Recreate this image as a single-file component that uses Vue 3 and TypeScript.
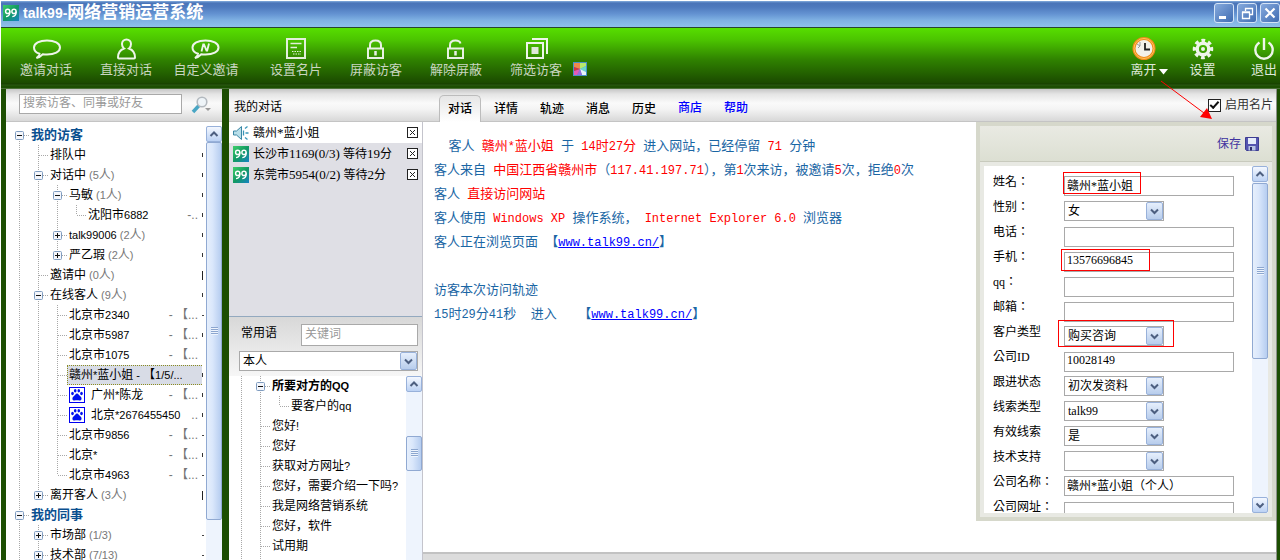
<script setup lang="ts">
import { ref } from 'vue'

interface Run { t: string; latin: boolean }
interface TreeRow {
  cells: string
  name: string
  count?: string
  tail?: string
  mark?: 'tick' | 'bar' | 'dot'
  root?: boolean
  bold?: boolean
  selected?: boolean
  paw?: boolean
}
interface Part { t: string; kind?: 'red' | 'link' }
interface Field {
  id: string
  label: string
  value: string
  select?: boolean
  note?: string
}

// Splits mixed text so that Latin runs can take their own family and size.
function runs(text: string): Run[] {
  return (text.match(/[\x20-\x7e]+|[^\x20-\x7e]+/g) ?? []).map(t => ({
    t,
    latin: /^[\x20-\x7e]/.test(t),
  }))
}

// Dotted guide lines of one 19 x 20 tree cell.
function guide(c: string): string {
  const up = 'M9.5 0V10'
  const down = 'M9.5 10V20'
  const across = 'M10 10.5H19'
  switch (c) {
    case '|': return up + down
    case 'T': return up + down + across
    case 'L': return up + across
    case 'r': return down + across
    case '-': case '+': return up + down + across
    case 'P': return up + across
    default: return ''
  }
}
const isBox = (c: string) => 'r-+P'.includes(c)
const isPlus = (c: string) => c === '+' || c === 'P'

const visitors: TreeRow[] = [
  { cells: 'r', name: '我的访客', root: true },
  { cells: '|T', name: '排队中', mark: 'tick' },
  { cells: '|-', name: '对话中', count: '(5人)', mark: 'tick' },
  { cells: '||-', name: '马敏', count: '(1人)', mark: 'tick' },
  { cells: '|||L', name: '沈阳市6882', tail: '-..', mark: 'tick' },
  { cells: '||+', name: 'talk99006', count: '(2人)', mark: 'tick' },
  { cells: '||P', name: '严乙瑕', count: '(2人)', mark: 'tick' },
  { cells: '|T', name: '邀请中', count: '(0人)', mark: 'bar' },
  { cells: '|-', name: '在线客人', count: '(9人)', mark: 'tick' },
  { cells: '||T', name: '北京市2340', tail: '- 【...', mark: 'dot' },
  { cells: '||T', name: '北京市5987', tail: '- 【...', mark: 'tick' },
  { cells: '||T', name: '北京市1075', tail: '- 【...' },
  { cells: '||T', name: '赣州*蓝小姐 - 【1/5/...', selected: true, mark: 'tick' },
  { cells: '||T', name: '广州*陈龙', tail: '- 【...', paw: true, mark: 'tick' },
  { cells: '||T', name: '北京*2676455450', tail: '..', paw: true, mark: 'tick' },
  { cells: '||T', name: '北京市9856', tail: '- 【...', mark: 'dot' },
  { cells: '||T', name: '北京*', tail: '- 【...', mark: 'tick' },
  { cells: '||L', name: '北京市4963', tail: '- 【...', mark: 'dot' },
  { cells: '|P', name: '离开客人', count: '(3人)', mark: 'bar' },
  { cells: '-', name: '我的同事', root: true },
  { cells: '|+', name: '市场部', count: '(1/3)', mark: 'dot' },
  { cells: '|+', name: '技术部', count: '(7/13)', mark: 'dot' },
]

const phrases: TreeRow[] = [
  { cells: '|-', name: '所要对方的QQ', bold: true },
  { cells: '||L', name: '要客户的qq' },
  { cells: '|T', name: '您好!' },
  { cells: '|T', name: '您好' },
  { cells: '|T', name: '获取对方网址?' },
  { cells: '|T', name: '您好，需要介绍一下吗?' },
  { cells: '|T', name: '我是网络营销系统' },
  { cells: '|T', name: '您好，软件' },
  { cells: '|T', name: '试用期' },
  { cells: '||', name: '' },
]

const chats = [
  { name: '赣州*蓝小姐', active: true },
  { name: '长沙市1169(0/3) 等待19分', active: false },
  { name: '东莞市5954(0/2) 等待2分', active: false },
]

const lines: Part[][] = [
  [{ t: '  客人 ' }, { t: '赣州*蓝小姐', kind: 'red' }, { t: ' 于 ' }, { t: '14时27分', kind: 'red' }, { t: ' 进入网站，已经停留 ' }, { t: '71', kind: 'red' }, { t: ' 分钟' }],
  [{ t: '客人来自 ' }, { t: '中国江西省赣州市', kind: 'red' }, { t: '（' }, { t: '117.41.197.71', kind: 'red' }, { t: '），第' }, { t: '1', kind: 'red' }, { t: '次来访，被邀请' }, { t: '5', kind: 'red' }, { t: '次，拒绝' }, { t: '0', kind: 'red' }, { t: '次' }],
  [{ t: '客人 ' }, { t: '直接访问网站', kind: 'red' }],
  [{ t: '客人使用 ' }, { t: 'Windows XP', kind: 'red' }, { t: ' 操作系统， ' }, { t: 'Internet Explorer 6.0', kind: 'red' }, { t: ' 浏览器' }],
  [{ t: '客人正在浏览页面 【' }, { t: 'www.talk99.cn/', kind: 'link' }, { t: '】' }],
  [],
  [{ t: '访客本次访问轨迹' }],
  [{ t: '15时29分41秒  进入   【' }, { t: 'www.talk99.cn/', kind: 'link' }, { t: '】' }],
]

const tabs = ['对话', '详情', '轨迹', '消息', '历史']
const tabLinks = ['商店', '帮助']

const fields = ref<Field[]>([
  { id: 'name', label: '姓名：', value: '赣州*蓝小姐', note: 'note-name' },
  { id: 'sex', label: '性别：', value: '女', select: true },
  { id: 'tel', label: '电话：', value: '' },
  { id: 'mobile', label: '手机：', value: '13576696845', note: 'note-mobile' },
  { id: 'qq', label: 'qq：', value: '' },
  { id: 'mail', label: '邮箱：', value: '' },
  { id: 'kind', label: '客户类型', value: '购买咨询', select: true, note: 'note-kind' },
  { id: 'company-id', label: '公司ID', value: '10028149' },
  { id: 'follow', label: '跟进状态', value: '初次发资料', select: true },
  { id: 'clue', label: '线索类型', value: 'talk99', select: true },
  { id: 'valid', label: '有效线索', value: '是', select: true },
  { id: 'support', label: '技术支持', value: '', select: true },
  { id: 'company', label: '公司名称：', value: '赣州*蓝小姐（个人）' },
  { id: 'site', label: '公司网址：', value: '' },
])

const search = ref('')
const keyword = ref('')
const owner = ref('本人')
const cardOn = ref(true)
</script>

<template>
  <div class="app">
    <header class="titlebar">
      <svg class="logo" width="16" height="16" viewBox="0 0 16 16">
        <defs>
          <linearGradient id="logo-fill" x1="0" y1="0" x2="1" y2="1">
            <stop offset="0" stop-color="#3fcf6a" /><stop offset="0.5" stop-color="#129a62" /><stop offset="1" stop-color="#1683c4" />
          </linearGradient>
        </defs>
        <rect width="16" height="16" fill="url(#logo-fill)" />
        <g fill="none" stroke="#fff" stroke-width="1.4">
          <circle cx="4.7" cy="6.4" r="2.1" /><path d="M6.8 6.4C7 9.5 6 11.400 3 11.600" />
          <circle cx="11" cy="6.400" r="2.100" /><path d="M13.100 6.400C13.300 9.500 12.300 11.400 9.300 11.600" />
        </g>
      </svg>
      <h1><span v-for="(r, i) in runs('talk99-网络营销运营系统')" :key="i" :class="{ latin: r.latin }">{{ r.t }}</span></h1>
      <div class="window-buttons">
        <button type="button" aria-label="最小化"><svg width="18" height="18"><rect x="4" y="12" width="7" height="3" fill="#fff" /></svg></button>
        <button type="button" aria-label="还原"><svg width="18" height="18"><path d="M7.500 7V4.500H14.500V10.500H12M7 4.500H15M4.500 8.500H11.500V14.500H4.500ZM4 8H12" fill="none" stroke="#fff" stroke-width="1.300" /></svg></button>
        <button type="button" aria-label="关闭"><svg width="18" height="18"><path d="M4.500 4.500L13.500 13.500M13.500 4.500L4.500 13.500" stroke="#fff" stroke-width="2.200" /></svg></button>
      </div>
    </header>

    <nav class="toolbar">
      <div class="tools">
        <button type="button" class="tool">
          <svg width="30" height="24" viewBox="0 0 30 24" fill="none" stroke="#eef5ea" stroke-width="2"><path d="M8.500 16.800C4.500 15.500 3 13 3 10.500C3 6.200 8.500 3.500 16 3.500S29 6.200 29 10.500S23.500 17.500 16 17.500C14.500 17.500 13 17.400 11.800 17.200C10 19 8 20.500 5.500 21C7.300 19.700 8.400 18.300 8.500 16.800Z" /></svg>
          <span>邀请对话</span>
        </button>
        <button type="button" class="tool">
          <svg width="30" height="24" viewBox="0 0 30 24" fill="none" stroke="#eef5ea" stroke-width="2"><path d="M13 11.500C11.300 10.300 11 8.500 11 7C11 4.300 13 2.500 15.500 2.500S20 4.300 20 7C20 8.500 19.700 10.300 18 11.500C22 13 24 16 24 20.500Q24 21.500 23 21.500H8Q7 21.500 7 20.500C7 16 9 13 13 11.500Z" /></svg>
          <span>直接对话</span>
        </button>
        <button type="button" class="tool">
          <svg width="30" height="24" viewBox="0 0 30 24" fill="none" stroke="#eef5ea" stroke-width="2"><path d="M7 16.800C3 15.500 1.500 13 1.500 10.500C1.500 6.200 7 3.500 14.500 3.500S27.500 6.200 27.500 10.500S22 17.500 14.500 17.500C13 17.500 11.500 17.400 10.300 17.200C8.500 19 6.500 20.500 4 21C5.800 19.700 6.900 18.300 7 16.800Z" /><path d="M10.500 14.500L12.200 7.500H13L15.500 13.500H16.200L18 6.500" stroke-width="1.800" /></svg>
          <span>自定义邀请</span>
        </button>
        <button type="button" class="tool group">
          <svg width="30" height="24" viewBox="0 0 30 24" fill="none" stroke="#e3efdc" stroke-width="2"><rect x="6" y="2" width="18" height="19" /><path d="M9.500 6.500H20.500M9.500 10.500H16" stroke-width="1.600" /><path d="M11 14.500H20M12 17H20" stroke-width="1.200" stroke-dasharray="1.500 1" /></svg>
          <span>设置名片</span>
        </button>
        <button type="button" class="tool">
          <svg width="30" height="24" viewBox="0 0 30 24" fill="none" stroke="#e8f1e3" stroke-width="2"><path d="M9 11.500V8C9 4.800 11.500 3.500 14.500 3.500S20 4.800 20 8V11.500" /><rect x="7" y="11.500" width="15" height="9.500" /><path d="M14.500 14V18.500" stroke-width="2.500" /></svg>
          <span>屏蔽访客</span>
        </button>
        <button type="button" class="tool">
          <svg width="30" height="24" viewBox="0 0 30 24" fill="none" stroke="#e8f1e3" stroke-width="2"><path d="M9 11.500V8C9 4.800 11.500 3.500 14.500 3.500C17 3.500 19 4.500 19.500 6.500" /><rect x="7" y="11.500" width="15" height="9.500" /><path d="M14.500 14V18.500" stroke-width="2.500" /></svg>
          <span>解除屏蔽</span>
        </button>
        <button type="button" class="tool">
          <svg width="30" height="24" viewBox="0 0 30 24" fill="none" stroke="#eef5ea" stroke-width="2"><rect x="6" y="6" width="16" height="15" /><path d="M11 2H26V17" /><rect x="11" y="10.500" width="6" height="6" fill="#dfe8da" stroke="#dfe8da" stroke-width="1" /></svg>
          <span>筛选访客</span>
        </button>
        <button type="button" class="palette" aria-label="换肤">
          <svg width="14" height="14" viewBox="0 0 14 14">
            <rect width="14" height="14" fill="#4a90c8" /><path d="M1 1H7V7L1 5Z" fill="#ee8a4a" /><path d="M7 1H13V4L7 7Z" fill="#b8e86a" /><path d="M13 4V10L7 7Z" fill="#6ad8c8" /><path d="M13 10V13H9L7 7Z" fill="#e8f4fa" /><path d="M9 13H4L7 7Z" fill="#9a6ae0" /><path d="M4 13H1V9L7 7Z" fill="#e45ab8" /><path d="M1 9V5L7 7Z" fill="#d8343c" />
          </svg>
        </button>
      </div>
      <div class="tools right">
        <button type="button" class="tool">
          <svg width="24" height="24" viewBox="0 0 24 24"><circle cx="12" cy="11.500" r="10" fill="#f3f1ea" stroke="#f08a1c" stroke-width="3" /><circle cx="12" cy="11.500" r="10" fill="none" stroke="#ffc65a" stroke-width="1" /><path d="M13 6V12.500H18" fill="none" stroke="#222" stroke-width="1.800" /><path d="M5 7L8 9L6 11M8 5V9" fill="none" stroke="#999" /></svg>
          <span class="away">离开<svg width="9" height="6"><path d="M0 0H9L4.500 5.500Z" fill="#fff" /></svg></span>
        </button>
        <button type="button" class="tool">
          <svg width="24" height="24" viewBox="0 0 24 24"><circle cx="12" cy="12" r="8.500" fill="none" stroke="#eef5ea" stroke-width="3.500" stroke-dasharray="3.600 3.076" transform="rotate(-12 12 12)" /><circle cx="12" cy="12" r="5.800" fill="none" stroke="#eef5ea" stroke-width="3.400" /><circle cx="12" cy="12" r="2" fill="#eef5ea" /></svg>
          <span>设置</span>
        </button>
        <button type="button" class="tool exit">
          <svg width="24" height="24" viewBox="0 0 24 24" fill="none" stroke="#eef5ea" stroke-width="2.400"><path d="M7.500 5.500C4.500 7.500 3.300 10 3.300 13A8.700 8.700 0 0 0 20.700 13C20.700 10 19.500 7.500 16.500 5.500M12 1V13" /></svg>
          <span>退出</span>
        </button>
      </div>
    </nav>

    <main class="body">
      <aside class="side">
        <div class="side-head">
          <input v-model="search" type="text" placeholder="搜索访客、同事或好友" aria-label="搜索访客、同事或好友">
          <button type="button" class="find" aria-label="搜索">
            <svg width="22" height="18" viewBox="0 0 22 18"><path d="M2 16L8 9.500" stroke="#49a6c4" stroke-width="3.500" /><circle cx="11" cy="6" r="4.800" fill="#eef4f8" stroke="#b3b9bf" stroke-width="1.600" /><path d="M14 12H20L17 15Z" fill="#9a9a9a" /></svg>
          </button>
        </div>
        <div class="side-body">
          <div class="tree" role="tree">
            <div v-for="(row, n) in visitors" :key="n" class="row" role="treeitem">
              <template v-for="(c, k) in row.cells.split('')" :key="k">
                <button v-if="isBox(c)" type="button" class="cell" :aria-label="row.name">
                  <svg width="19" height="20"><path :d="guide(c)" class="dots" /><rect x="5.500" y="6.500" width="8" height="8" rx="1" class="box" /><path :d="isPlus(c) ? 'M7 10.500H12M9.500 8V13' : 'M7 10.500H12'" class="sign" /></svg>
                </button>
                <svg v-else class="cell" width="19" height="20"><path :d="guide(c)" class="dots" /></svg>
              </template>
              <div class="line" :class="{ selected: row.selected }">
                <svg v-if="row.paw" class="paw" width="16" height="16" viewBox="0 0 16 16"><rect x="0.500" y="0.500" width="15" height="15" fill="#fff" stroke="#0000f0" /><g fill="#0010f0"><ellipse cx="3.500" cy="6.500" rx="1.300" ry="1.700" /><ellipse cx="6.200" cy="3.700" rx="1.300" ry="1.700" /><ellipse cx="9.800" cy="3.700" rx="1.300" ry="1.700" /><ellipse cx="12.500" cy="6.500" rx="1.300" ry="1.700" /><path d="M8 6.500C9.500 6.500 10 8.500 11.500 9.500C13.500 11 12.500 14 10.500 13.500C8.500 13 7.500 13 5.500 13.500C3.500 14 2.500 11 4.500 9.500C6 8.500 6.500 6.500 8 6.500Z" /></g></svg>
                <span class="name" :class="{ root: row.root }"><span v-for="(r, i) in runs(row.name)" :key="i" :class="{ latin: r.latin }">{{ r.t }}</span></span>
                <span v-if="row.count" class="count"><span v-for="(r, i) in runs(row.count)" :key="i" :class="{ latin: r.latin }">{{ r.t }}</span></span>
                <span v-if="row.tail" class="tail">{{ row.tail }}</span>
              </div>
              <i class="mark" :class="row.mark" />
            </div>
          </div>
          <div class="scroll side-scroll">
            <button type="button" aria-label="向上"><svg width="16" height="16"><path d="M4.500 10L8 6.500L11.500 10" class="chev" /></svg></button>
            <div class="thumb"><i /></div>
          </div>
        </div>
      </aside>

      <section class="work">
        <div class="work-head">
          <h2>我的对话</h2>
          <div class="tabs">
            <button v-for="(t, i) in tabs" :key="t" type="button" :class="{ on: i === 0 }">{{ t }}</button>
            <a v-for="t in tabLinks" :key="t" href="#">{{ t }}</a>
          </div>
          <label class="enable"><input v-model="cardOn" type="checkbox"><span>启用名片</span></label>
        </div>

        <div class="work-body">
          <div class="mid">
            <div class="chats">
              <div v-for="c in chats" :key="c.name" class="chat" :class="{ active: c.active }">
                <svg v-if="c.active" width="16" height="16" viewBox="0 0 16 16"><path d="M0.500 6H3.500L8.500 1.500V14.500L3.500 10H0.500Z" fill="#b9dfea" stroke="#3a86a4" /><path d="M10.500 5.500V10.500M12 3.500L14.500 1.500M12.500 8H15.500M12 12.500L14.500 14.500" stroke="#3a96b8" stroke-width="1.300" fill="none" /></svg>
                <svg v-else width="16" height="16" viewBox="0 0 16 16"><rect width="16" height="16" fill="url(#logo-fill)" /><g fill="none" stroke="#fff" stroke-width="1.400"><circle cx="4.700" cy="6.400" r="2.100" /><path d="M6.800 6.400C7 9.500 6 11.400 3 11.600" /><circle cx="11" cy="6.400" r="2.100" /><path d="M13.100 6.400C13.300 9.500 12.300 11.400 9.300 11.600" /></g></svg>
                <span class="who"><span v-for="(r, i) in runs(c.name)" :key="i" :class="{ latin: r.latin }">{{ r.t }}</span></span>
                <button type="button" aria-label="关闭"><svg width="11" height="11"><rect x="0.500" y="0.500" width="10" height="10" fill="#fff" stroke="#222" /><path d="M3 3L8 8M8 3L3 8" stroke="#222" /></svg></button>
              </div>
            </div>
            <div class="phrase-head">
              <div class="phrase-line">
                <label for="keyword">常用语</label>
                <input id="keyword" v-model="keyword" type="text" placeholder="关键词">
              </div>
              <div class="picker wide">
                <select v-model="owner" aria-label="常用语范围"><option>本人</option></select>
                <span class="drop"><svg width="15" height="16"><path d="M4 6.500L7.500 10L11 6.500" class="chev" /></svg></span>
              </div>
            </div>
            <div class="phrase-body">
              <div class="tree" role="tree">
                <div v-for="(row, n) in phrases" :key="n" class="row" role="treeitem">
                  <template v-for="(c, k) in row.cells.split('')" :key="k">
                    <button v-if="isBox(c)" type="button" class="cell" :aria-label="row.name">
                      <svg width="19" height="20"><path :d="guide(c)" class="dots" /><rect x="5.500" y="6.500" width="8" height="8" rx="1" class="box" /><path d="M7 10.500H12" class="sign" /></svg>
                    </button>
                    <svg v-else class="cell" width="19" height="20"><path :d="guide(c)" class="dots" /></svg>
                  </template>
                  <div class="line">
                    <span class="name" :class="{ strong: row.bold }"><span v-for="(r, i) in runs(row.name)" :key="i" :class="{ latin: r.latin }">{{ r.t }}</span></span>
                  </div>
                </div>
              </div>
              <div class="scroll phrase-scroll">
                <button type="button" aria-label="向上"><svg width="16" height="16"><path d="M4.500 10L8 6.500L11.500 10" class="chev" /></svg></button>
                <div class="thumb"><i /></div>
              </div>
            </div>
          </div>

          <div class="talk">
            <div class="talk-main">
              <div class="log">
                <p v-for="(line, n) in lines" :key="n"><template v-for="(p, k) in line" :key="k"><a v-if="p.kind === 'link'" href="#" class="latin">{{ p.t }}</a><span v-else :class="p.kind"><span v-for="(r, i) in runs(p.t)" :key="i" :class="{ latin: r.latin }">{{ r.t }}</span></span></template></p>
              </div>
              <form v-if="cardOn" class="card" @submit.prevent>
                <div class="card-head">
                  <button type="submit">保存<svg width="14" height="14" viewBox="0 0 14 14"><path d="M0.500 0.500H13.500V13.500H1.500L0.500 12.500Z" fill="#5555b0" stroke="#3d3d92" /><rect x="3" y="1" width="8" height="6" fill="#e6ecfa" /><rect x="3.500" y="9" width="7" height="4.500" fill="#b8c4e4" /><rect x="5" y="10" width="2" height="3.500" fill="#2d2d6c" /></svg></button>
                </div>
                <div class="card-body">
                  <div class="fields">
                    <div v-for="f in fields" :key="f.id" class="field">
                      <label :for="f.id">{{ f.label }}</label>
                      <div class="control">
                        <div v-if="f.select" class="picker">
                          <select :id="f.id" v-model="f.value"><option>{{ f.value }}</option></select>
                          <span class="drop"><svg width="15" height="16"><path d="M4 6.500L7.500 10L11 6.500" class="chev" /></svg></span>
                        </div>
                        <input v-else :id="f.id" v-model="f.value" type="text">
                        <i v-if="f.note" class="note" :class="f.note" />
                      </div>
                    </div>
                  </div>
                  <div class="scroll card-scroll">
                    <button type="button" aria-label="向上"><svg width="16" height="16"><path d="M4.500 10L8 6.500L11.500 10" class="chev" /></svg></button>
                    <div class="track"><div class="thumb"><i /></div></div>
                    <button type="button" aria-label="向下"><svg width="16" height="16"><path d="M4.500 6.500L8 10L11.500 6.500" class="chev" /></svg></button>
                  </div>
                </div>
              </form>
            </div>
            <div class="talk-foot" />
          </div>
        </div>
      </section>
    </main>

    <svg class="arrow" width="54" height="42" viewBox="0 0 54 42"><path d="M1 1L44 33" stroke="#f00" fill="none" /><path d="M52 39L40 37L47 28Z" fill="#f00" /></svg>
  </div>
</template>

<style>
html, body { margin: 0; background: #fff; }
</style>

<style scoped>
.app {
  position: relative;
  box-sizing: border-box;
  height: 100vh;
  padding: 1px 0 0 1px;
  display: flex;
  flex-direction: column;
  overflow: hidden;
  font: 12px/18px "Liberation Sans", "Noto Sans CJK SC", sans-serif;
  color: #000;
}
.app *, .app *::before { box-sizing: border-box; }
button, input, select { font: inherit; color: inherit; margin: 0; }
button { padding: 0; border: 0; background: none; cursor: pointer; }
svg { display: block; flex: none; }
h1, h2, p { margin: 0; }
a { color: #00f; }
.latin { white-space: pre; }

.titlebar {
  flex: none;
  height: 27px;
  display: flex;
  align-items: center;
  gap: 4px;
  padding: 0 0 2px 2px;
  background: linear-gradient(#86aede 0, #4a74b8 2px, #4e79bd 6px, #6493d2 13px, #7eb0e2 19px, #8fc1ea 26px);
  border-bottom: 1px solid #26452f;
}
.titlebar h1 { font-size: 17px; line-height: 22px; font-weight: 700; color: #fff; flex: 1; white-space: nowrap; }
.titlebar .latin { font-size: 14px; }
.window-buttons { display: flex; gap: 3px; }
.window-buttons button {
  width: 20px;
  height: 20px;
  border: 1px solid #d4e4f7;
  border-radius: 3px;
  background: linear-gradient(135deg, #86aadd, #3f6cb2);
}

.toolbar {
  flex: none;
  height: 61px;
  display: flex;
  justify-content: space-between;
  background: linear-gradient(#57de00 0, #4bc400 12px, #2f8100 32px, #1b4a00 55px, #173f00 56px, #2c5a14 57px, #1c4e02 58px, #1c4e02 60px, #7b9470 61px);
}
.tools { display: flex; padding-left: 5px; }
.tool {
  width: 80px;
  padding-top: 9px;
  display: flex;
  flex-direction: column;
  align-items: center;
  font-size: 13px;
  line-height: 18px;
  color: #c9d6c1;
}
.tool svg { margin-left: 0; }
.group { margin-left: 10px; }
.palette { align-self: flex-start; margin: 34px 0 0 -3px; }
.tools.right .tool { width: 59px; color: #dfe8da; }
.tools.right .exit { width: 32px; margin-left: 16px; }
.away { position: relative; }
.away svg { position: absolute; left: 29px; top: 8px; }

.body {
  flex: 1;
  min-height: 0;
  display: flex;
  gap: 7px;
  padding: 0 3px 0 5px;
  background: #1c4e02;
}
.side { width: 216px; flex: none; display: flex; flex-direction: column; background: #fff; }
.side-head, .work-head {
  flex: none;
  height: 33px;
  background: linear-gradient(#c6c6c6, #e4e4e4 5px, #fafafa 14px, #f4f4f4 20px, #d8d8d8);
  border-bottom: 1px solid #c4c4c4;
}
.side-head { display: flex; align-items: flex-start; gap: 9px; padding: 5px 0 0 13px; }
.side-head input, .phrase-line input {
  height: 20px;
  padding: 0 3px 2px;
  border: 1px solid #a9a9a9;
  background: #fff;
  outline: 0;
}
.side-head input { width: 163px; }
input::placeholder { color: #999; opacity: 1; }
.find { margin-top: 2px; }
.side-body { flex: 1; min-height: 0; display: flex; padding-top: 3px; }
.tree { flex: 1; min-width: 0; overflow: hidden; }
.side .tree { padding-left: 4px; }
.row { display: flex; height: 20px; align-items: center; }
.cell { width: 19px; height: 20px; flex: none; }
.dots { fill: none; stroke: #a8a8a8; stroke-dasharray: 1 1; }
.box { fill: #f4f6fb; stroke: #7f9cc0; }
.sign { stroke: #111; fill: none; }
.line {
  flex: 1;
  min-width: 0;
  height: 20px;
  display: flex;
  align-items: center;
  padding-left: 1px;
  border: 1px solid transparent;
  white-space: pre;
}
.selected { background: #d8dce6; border: 1px dotted #8c8c20; border-right: 0; }
.tree .latin { font-size: 11px; }
.paw { margin-right: 6px; }
.root { font-size: 13px; font-weight: 700; color: #0a4f8f; }
.strong { font-weight: 700; }
.count { margin-left: 3px; color: #777; }
.tail { margin-left: auto; padding-right: 3px; color: #777; }
.mark { width: 2px; margin-right: 2px; flex: none; }
.tick { height: 4px; border-left: 1px solid #333; }
.bar { height: 9px; border-left: 1px solid #222; }
.dot { height: 1px; background: #444; }

.scroll { width: 16px; flex: none; background: #eef4fd; display: flex; flex-direction: column; }
.scroll button { flex: none; height: 16px; border: 1px solid #98b1da; border-radius: 2px; background: linear-gradient(#f4f8ff, #bcd2f4); }
.scroll button svg { margin: -1px; }
.chev { fill: none; stroke: #4d5f80; stroke-width: 2; }
.thumb {
  display: flex;
  align-items: center;
  justify-content: center;
  border: 1px solid #90a9d2;
  border-radius: 2px;
  background: linear-gradient(90deg, #e6effc, #dae7fb 40%, #b6cdf0);
}
.thumb i { width: 7px; height: 8px; background: repeating-linear-gradient(#8ca6cf 0 1px, #eef4fd 1px 2px); }
.side-scroll { margin-top: 1px; }
.side-scroll .thumb { height: 87%; }
.phrase-scroll .thumb { height: 19%; margin-top: 44px; }

.work { flex: 1; min-width: 0; display: flex; flex-direction: column; background: #fff; border-right: 1px solid #8b9088; }
.work-head { display: flex; }
.work-head h2 { width: 210px; flex: none; padding-left: 5px; font-size: 12px; line-height: 36px; font-weight: 400; }
.tabs { flex: 1; display: flex; height: 33px; padding-top: 6px; }
.tabs button, .tabs a {
  width: 42px;
  margin-right: 4px;
  height: 27px;
  line-height: 25px;
  text-align: center;
  text-decoration: none;
  font-weight: 500;
  border: 1px solid transparent;
  border-bottom: 0;
}
.tabs .on { background: linear-gradient(#e6e6e6, #fff); border-color: #bcbcbc; border-radius: 5px 5px 0 0; }
.enable { display: flex; align-items: center; gap: 4px; padding-right: 3px; color: #333; }
.enable input {
  appearance: none;
  width: 13px;
  height: 13px;
  border: 1px solid #222;
  background: #fff;
  display: grid;
  place-items: center;
}
.enable input:checked::before { content: ""; width: 9px; height: 5px; border: solid #111; border-width: 0 0 2px 2px; transform: rotate(-48deg) translate(1px, -1px); }

.work-body { flex: 1; min-height: 0; display: flex; }
.mid { width: 194px; flex: none; display: flex; flex-direction: column; border-right: 1px solid #c4c4cc; }
.chats { flex: 0 0 195px; background: #dfdfe5; border-bottom: 1px solid #93a9bf; }
.chat { display: flex; align-items: center; gap: 4px; height: 21px; padding: 0 4px; }
.active { background: #fff; }
.who { flex: 1; white-space: pre; }
.who .latin { font: 13px/18px "Liberation Serif", serif; }
.phrase-head { flex: none; padding: 7px 4px 5px 10px; background: linear-gradient(#d8d8d8, #f6f6f6); }
.phrase-line { display: flex; align-items: flex-start; }
.phrase-line label { width: 62px; padding-left: 2px; }
.phrase-line input { flex: 1; min-width: 0; height: 22px; }
.phrase-body { flex: 1; min-height: 0; display: flex; }
.phrase-body .tree { padding-left: 3px; }

.picker { position: relative; width: 100px; height: 20px; }
.wide { width: auto; margin-top: 5px; }
.picker select {
  appearance: none;
  width: 100%;
  height: 100%;
  padding: 0 20px 0 3px;
  border: 1px solid #a9a9a9;
  border-radius: 0;
  background: #fff;
  outline: 0;
}
.drop {
  position: absolute;
  top: 1px;
  right: 1px;
  width: 17px;
  height: 18px;
  border: 1px solid #98b1da;
  border-radius: 2px;
  background: linear-gradient(#e6effc, #b8cdec);
  pointer-events: none;
}

.talk { flex: 1; min-width: 0; display: flex; flex-direction: column; }
.talk-main { flex: 1; min-height: 0; display: flex; align-items: flex-start; }
.talk-foot { flex: none; height: 8px; background: #dcdcdc; border-top: 2px solid #c2c2c2; }
.log { flex: 1; min-width: 0; padding: 11px 0 0 11px; font-size: 13px; line-height: 24px; color: #1a66a4; font-family: "Noto Sans CJK SC", sans-serif; }
.log p { height: 24px; white-space: pre; }
.log .latin { font-family: "Liberation Mono", monospace; font-size: 12px; }
.red { color: #f00; }

.card {
  width: 300px;
  height: calc(100% - 31px);
  flex: none;
  display: flex;
  flex-direction: column;
  border: 4px solid #d6d8cb;
  background: #e8e9e3;
  font-family: "Liberation Serif", "Noto Sans CJK SC", serif;
}
.card-head {
  flex: none;
  height: 36px;
  display: flex;
  justify-content: flex-end;
  padding-right: 13px;
  background: linear-gradient(#e9eae3, #dcdfd2);
  border-bottom: 1px solid #c8cabd;
}
.card-head button { display: flex; align-items: center; gap: 4px; color: #4034a0; }
.card-body { flex: 1; min-height: 0; display: flex; margin: 4px; background: #fff; }
.fields { flex: 1; min-width: 0; overflow: hidden; padding: 7px 0 0 9px; }
.field { display: flex; height: 25px; }
.field label { width: 71px; flex: none; line-height: 18px; white-space: nowrap; font-family: "Liberation Serif", "Noto Sans CJK TC", serif; }
.control { position: relative; width: 170px; height: 20px; margin-top: 3px; }
.control input { width: 100%; height: 20px; padding: 0 2px 2px; border: 1px solid #a9a9a9; background: #fff; outline: 0; }
.note { position: absolute; border: 1px solid #f00; pointer-events: none; }
.note-name { left: -1px; top: -4px; width: 78px; height: 22px; }
.note-mobile { left: -3px; top: -2px; width: 89px; height: 22px; }
.note-kind { left: -6px; top: -6px; width: 116px; height: 27px; }
.card-scroll .track { flex: 1; padding-top: 1px; }
.card-scroll .thumb { height: 56%; }
.arrow { position: absolute; top: 80px; right: 66px; pointer-events: none; }
</style>
